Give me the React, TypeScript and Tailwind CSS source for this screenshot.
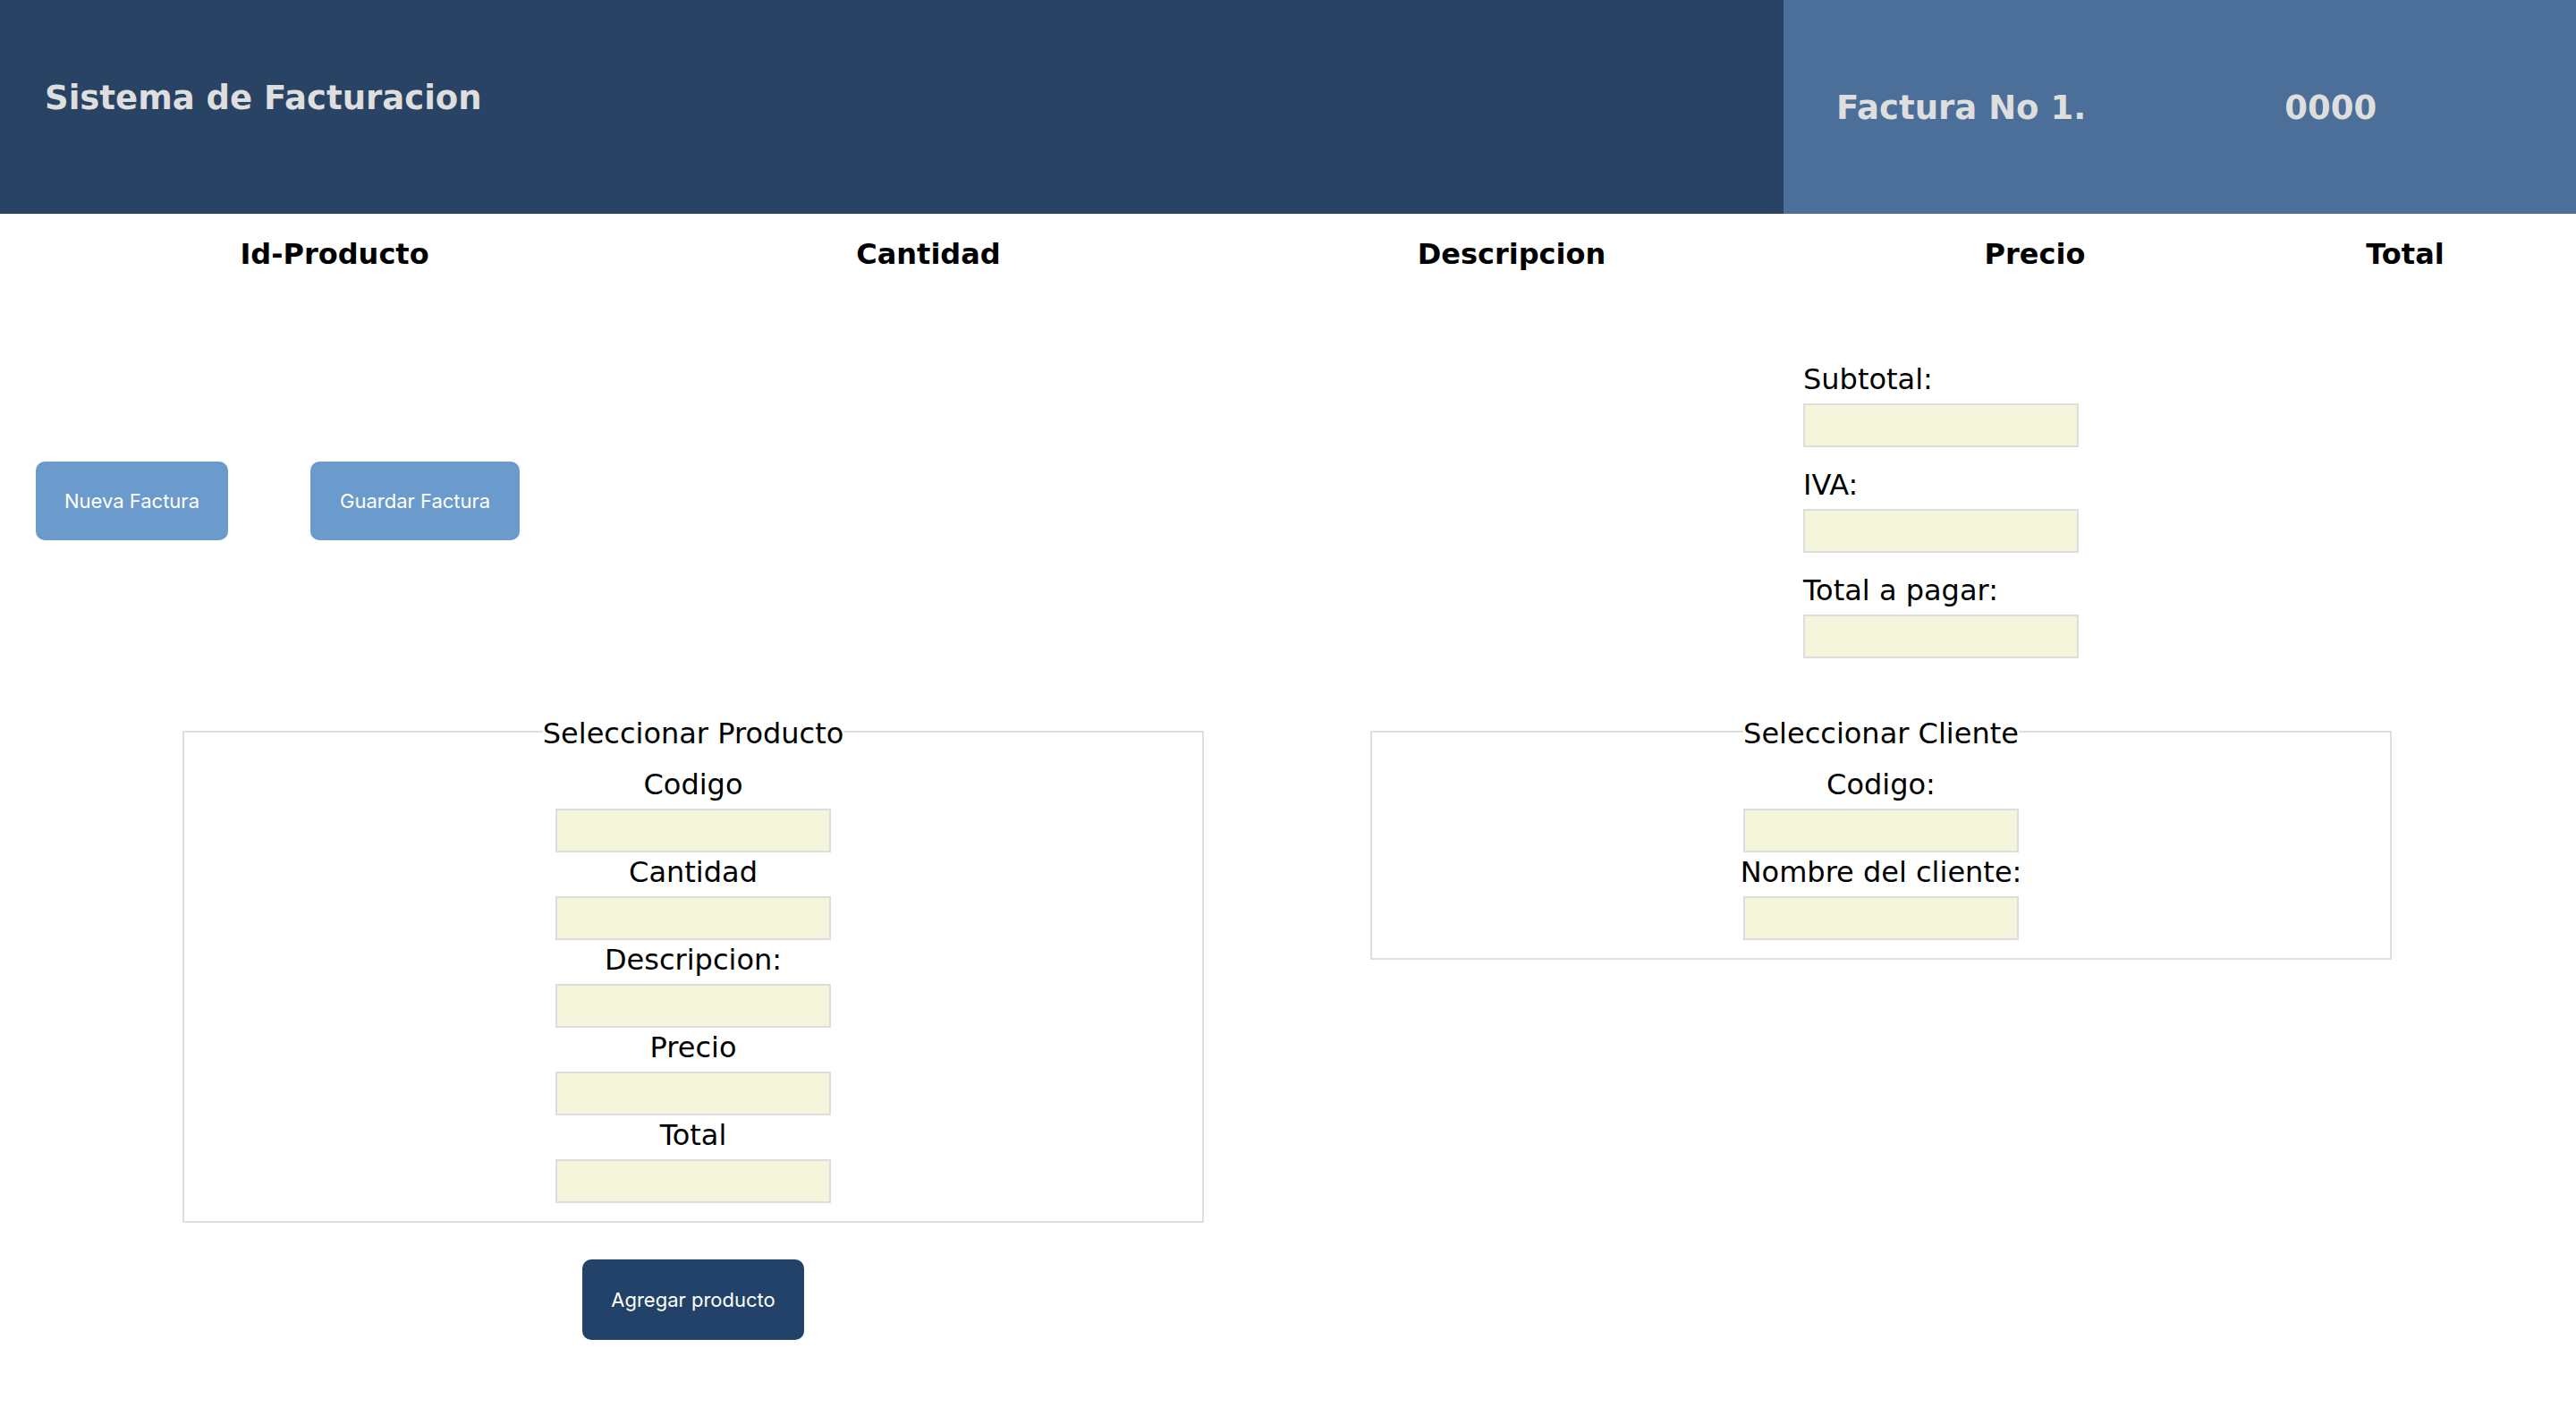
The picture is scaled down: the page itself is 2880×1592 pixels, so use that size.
import React from "react";

const inputCls =
  "block w-[308px] h-[49px] border-2 border-[#dddddd] bg-[#f5f5dc] outline-none";

function Field({ label, first }: { label: string; first?: boolean }) {
  return (
    <div className={first ? "flex flex-col items-center" : "flex flex-col items-center mt-[4px]"}>
      <label className="block text-[32px] leading-[37px] text-black">{label}</label>
      <input className={inputCls + " mt-[8px]"} />
    </div>
  );
}

function TotalField({ label, first }: { label: string; first?: boolean }) {
  return (
    <div className={first ? "" : "mt-[24px]"}>
      <label className="block text-[32px] leading-[37px] text-black">{label}</label>
      <input className={inputCls + " mt-[8px]"} />
    </div>
  );
}

export default function App() {
  return (
    <div className="min-h-screen w-[2880px] bg-white font-['DejaVu_Sans',Verdana,sans-serif] text-black">
      {/* Header */}
      <header className="flex h-[239px]">
        <div className="w-[1994px] bg-[#284363] pl-[50px] pt-[88px]">
          <h1 className="text-[37px] leading-[43px] font-bold text-[#dedede]">
            Sistema de Facturacion
          </h1>
        </div>
        <div className="flex-1 bg-[#4b6f99] pl-[59px] pt-[99px] flex items-start gap-[222px]">
          <span className="text-[37px] leading-[43px] font-bold text-[#dedede]">Factura No 1.</span>
          <span className="text-[37px] leading-[43px] font-bold text-[#dedede]">0000</span>
        </div>
      </header>

      {/* Table header */}
      <div className="grid grid-cols-[748px_580px_724px_446px_382px] pt-[27px] text-center text-[32px] leading-[37px] font-bold">
        <div>Id-Producto</div>
        <div>Cantidad</div>
        <div>Descripcion</div>
        <div>Precio</div>
        <div>Total</div>
      </div>

      {/* Buttons + totals */}
      <div className="flex">
        <div className="flex-1 pl-[40px] pt-[213px] flex items-start gap-[92px] font-['Inter',sans-serif]">
          <button className="h-[88px] px-[32px] rounded-[10px] bg-[#6b9acd] text-white text-[22px]">
            Nueva Factura
          </button>
          <button className="h-[88px] px-[33px] rounded-[10px] bg-[#6b9acd] text-white text-[22px]">
            Guardar Factura
          </button>
        </div>
        <div className="w-[864px] pt-[103px]">
          <TotalField label="Subtotal:" first />
          <TotalField label="IVA:" />
          <TotalField label="Total a pagar:" />
        </div>
      </div>

      {/* Fieldsets */}
      <div className="flex items-start gap-[186px] pl-[204px] pr-[206px] mt-[60px]">
        <div className="flex-1 flex flex-col items-center">
          <fieldset className="w-full border-2 border-[#dedede] px-[24px] pt-[20px] pb-[20px] text-center">
            <legend className="mx-auto pt-[6px] text-[32px] leading-[37px]">Seleccionar Producto</legend>
            <Field label="Codigo" first />
            <Field label="Cantidad" />
            <Field label="Descripcion:" />
            <Field label="Precio" />
            <Field label="Total" />
          </fieldset>
          <button className="mt-[41px] w-[248px] h-[90px] rounded-[10px] bg-[#22426a] text-white text-[22px] font-['Inter',sans-serif]">
            Agregar producto
          </button>
        </div>
        <div className="flex-1">
          <fieldset className="w-full border-2 border-[#dedede] px-[24px] pt-[20px] pb-[20px] text-center">
            <legend className="mx-auto pt-[6px] text-[32px] leading-[37px]">Seleccionar Cliente</legend>
            <Field label="Codigo:" first />
            <Field label="Nombre del cliente:" />
          </fieldset>
        </div>
      </div>
    </div>
  );
}
